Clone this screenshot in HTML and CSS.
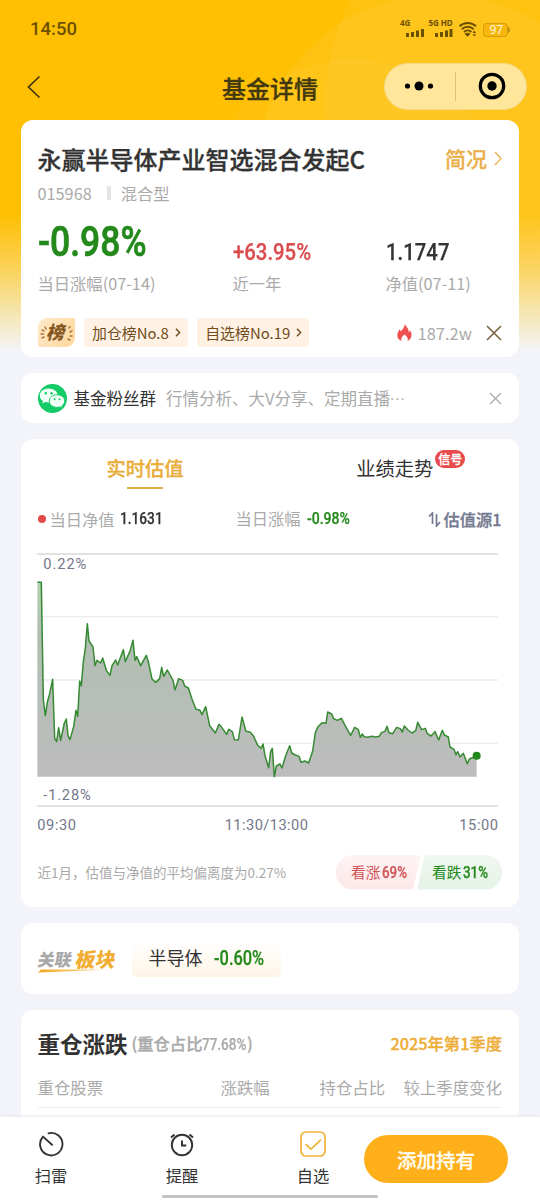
FILE: index.html
```html
<!DOCTYPE html>
<html lang="zh-CN">
<head>
<meta charset="utf-8">
<title>基金详情</title>
<link rel="stylesheet" href="styles.css">
</head>
<body>
<div class="screen">
  <svg class="glow" viewBox="0 0 540 360" aria-hidden="true">
    <circle cx="440" cy="180" r="186" fill="#fff" fill-opacity=".06"/>
    <circle cx="540" cy="100" r="214" fill="#fff" fill-opacity=".05"/>
    <circle cx="352" cy="212" r="152" fill="#fff" fill-opacity=".04"/>
  </svg>
  <div class="status">
    <span class="clock">14:50</span>
    <svg class="signals" width="112" height="24" viewBox="0 0 112 24">
      <g fill="#6b5000">
        <text x="0" y="9" class="net">4G</text>
        <text x="28.5" y="9" class="net" textLength="24">5G HD</text>
        <path d="M6 16h3v4h-3zM11 15h3v5h-3zM16 13.500h3v6.500h-3zM21 12h3v8h-3zM35 16h3v4h-3zM40 15h3v5h-3zM45 13.500h3v6.500h-3zM49.500 12h3v8h-3z"/>
        <path d="M64.500 16.800l3 3 3-3a5 5 0 0 0-6 0z"/>
        <path d="M72.500 16l1.800-2.400 1.800 2.400zM72.500 17.200h3.600l-1.800 2.400z"/>
      </g>
      <g fill="none" stroke="#6b5000" stroke-width="2"><path d="M59.500 9.300a12 12 0 0 1 16.500 0M61.800 12.200a8.500 8.500 0 0 1 11.800 0M64 15a5.500 5.500 0 0 1 7.400 0"/></g>
      <rect x="83.500" y="6.500" width="24" height="13" rx="3" fill="#f8b70f" stroke="#d59b08"/>
      <path d="M108.500 10.500q1.500 2.500 0 5" stroke="#8b6814" fill="none"/>
      <text x="89.500" y="17" class="battery">97</text>
    </svg>
  </div>
  <header class="nav">
    <svg class="back" width="14" height="24" viewBox="0 0 14 24"><path d="M12.500 1.500L1.500 12l11 10.500" fill="none" stroke="#42360f" stroke-width="1.700"/></svg>
    <h1>基金详情</h1>
    <div class="capsule">
      <svg width="30" height="10" viewBox="0 0 30 10"><circle cx="3.500" cy="5" r="2.600"/><circle cx="15" cy="5" r="4.500"/><circle cx="26.500" cy="5" r="2.600"/></svg>
      <i></i>
      <svg width="28" height="28" viewBox="0 0 28 28"><circle cx="14" cy="14" r="11.700" fill="none" stroke="#000" stroke-width="3.200"/><circle cx="14" cy="14" r="4.700"/></svg>
    </div>
  </header>

  <main>
    <section class="card summary">
      <div class="row title-row">
        <h2>永赢半导体产业智选混合发起C</h2>
        <a class="brief">简况<svg width="8" height="15" viewBox="0 0 8 15"><path d="M1 1l6 6.500L1 14" fill="none" stroke="#eab04c" stroke-width="1.300"/></svg></a>
      </div>
      <div class="meta"><span>015968</span><i></i><span>混合型</span></div>
      <div class="stats">
        <div><strong class="din big green">-0.98%</strong><small>当日涨幅(07-14)</small></div>
        <div><strong class="din mid red">+63.95%</strong><small>近一年</small></div>
        <div><strong class="din mid">1.1747</strong><small>净值(07-11)</small></div>
      </div>
      <div class="ranks">
        <span class="medal"><svg width="37" height="29" viewBox="0 0 37 29"><g stroke="#a77742" stroke-width="1.500" stroke-linecap="round"><path d="M4 12l2 1M3 16h2.500M4 20l2-1M7 9l1 2M31 10l1-1.500M32 14l2-1M32 18h2M30 21l2 1"/></g><text x="8" y="21" class="medal-text">榜</text></svg></span>
        <span class="tag">加仓榜No.8<svg width="6" height="9" viewBox="0 0 6 9"><path d="M1 .8l3.600 3.700L1 8.200"/></svg></span>
        <span class="tag">自选榜No.19<svg width="6" height="9" viewBox="0 0 6 9"><path d="M1 .8l3.600 3.700L1 8.200"/></svg></span>
        <span class="heat"><svg width="15" height="18" viewBox="0 0 15 18"><path d="M8 0c1 3 4.500 5 3.500 8.500 1-.5 1.300-1.300 1.300-2.500 1.400 2 2 3.700 1.700 5.800-.4 3-2.200 4.600-4.200 5.200 1-1.800.9-3.500-2.800-6.500-3.600 3-3.700 4.700-2.700 6.500C2 16.300.4 14.300.3 11.500.2 8.500 2 7 2.500 5.200c.9.700 1.100 1.400 1.200 2.300C5.700 5.500 7.500 3 8 0z" fill="#ee5050"/></svg>187.2w</span>
        <svg class="close" width="16" height="16" viewBox="0 0 16 16"><path d="M1 1l14 14M15 1L1 15" stroke="#76603c" stroke-width="1.500"/></svg>
      </div>
    </section>

    <section class="card group">
      <svg width="29" height="29" viewBox="0 0 29 29"><circle cx="14.500" cy="14.500" r="14.500" fill="#15cb68"/>
        <path d="M10.500 4.500C5.500 4.500 1.800 7.600 1.800 11.600c0 2.300 1.200 4.200 3.200 5.500l-.8 2.500 3.100-1.600c1.200.3 2.100.5 3.400.5 5.200 0 9-3.100 9-7s-4-7-9.200-7z" fill="#f0fff5"/>
        <path d="M19 10.700c-4.500 0-7.700 2.800-7.700 6.300s3.300 6.400 7.700 6.400c1 0 2-.2 2.800-.5l2.700 1.400-.7-2.300c1.800-1.200 2.900-2.900 2.900-5 0-3.500-3.300-6.300-7.700-6.300z" fill="#f0fff5" stroke="#15cb68"/>
        <g fill="#15cb68"><circle cx="7.800" cy="9.300" r="1.200"/><circle cx="13.500" cy="9.300" r="1.200"/><circle cx="16.700" cy="15.300" r="1"/><circle cx="21.500" cy="15.300" r="1"/></g></svg>
      <b>基金粉丝群</b>
      <span>行情分析、大V分享、定期直播<u>···</u></span>
      <svg class="close" width="13" height="13" viewBox="0 0 13 13"><path d="M1 1l11 11M12 1L1 12" stroke="#aaa" stroke-width="1.200"/></svg>
    </section>

    <section class="card trend">
      <nav class="tabs">
        <div class="tab active">实时估值</div>
        <div class="tab">业绩走势<em>信号</em></div>
      </nav>
      <div class="values">
        <div class="v1"><i></i>当日净值<strong class="din small">1.1631</strong></div>
        <div class="v2">当日涨幅<strong class="din small green">-0.98%</strong></div>
        <div class="source"><svg width="13" height="15" viewBox="0 0 13 15"><path d="M1 4.500L4.500 1v11M8.500 2v12L12 10" fill="none" stroke="#737990" stroke-width="1.700"/></svg>估值源1</div>
      </div>
      <!-- Chart units are thirds of a pixel -->
      <svg class="chart" width="464" height="300" viewBox="21 0 1392 900">
        <defs><linearGradient id="area" x1="0" y1="0" x2="0" y2="1"><stop offset="0" stop-color="#add0ac"/><stop offset=".25" stop-color="#adbbae"/><stop offset="1" stop-color="#b9b9b9"/></linearGradient></defs>
        <g stroke-width="4"><path d="M21 27H1404M21 783H1404" stroke="#d9d9d9"/><path d="M21 215H1404M21 405H1404M21 595H1404" stroke="#ededed"/></g>
        <path fill="url(#area)" fill-opacity=".95" d="M22 695V112H34L40 465 46 512 52 472 58 450 68 403 74 580 80 590 86 548 92 586 103 534 109 522 114 572 120 584 131 545 138 496 143 514 149 408 154 422 160 350 166 310 172 236 177 288 183 297 189 306 195 362 201 346 212 354 218 339 229 376 240 391 246 362 257 345 263 360 280 314 286 350 300 318 309 286 315 346 320 335 332 362 349 331 355 350 366 402 377 412 389 401 395 367 401 394 412 375 429 406 435 435 446 401 458 406 464 423 475 429 487 465 498 493 510 496 516 509 527 485 539 542 556 564 567 538 573 544 590 568 596 553 607 560 613 584 625 585 636 516 648 559 660 561 670 572 682 599 693 610 699 597 705 632 716 668 722 620 727 610 733 695 739 663 750 657 756 669 767 632 779 602 785 624 796 630 807 634 813 652 824 648 836 654 848 618 856 563 864 545 876 533 888 535 893 501 905 507 911 521 922 526 934 520 950 550 962 571 974 547 985 554 991 577 997 567 1002 575 1014 577 1025 574 1037 576 1048 574 1054 563 1065 559 1071 544 1077 563 1088 566 1100 547 1111 551 1117 561 1123 543 1134 555 1146 564 1157 557 1163 532 1175 554 1186 550 1192 566 1203 573 1215 560 1226 585 1237 556 1243 570 1255 576 1260 606 1272 613 1278 629 1283 620 1290 636 1300 625 1312 656 1318 642 1340 633V695Z"/>
        <path fill="none" stroke="#368a32" stroke-width="4.500" stroke-linejoin="round" d="M22 112H34L40 465 46 512 52 472 58 450 68 403 74 580 80 590 86 548 92 586 103 534 109 522 114 572 120 584 131 545 138 496 143 514 149 408 154 422 160 350 166 310 172 236 177 288 183 297 189 306 195 362 201 346 212 354 218 339 229 376 240 391 246 362 257 345 263 360 280 314 286 350 300 318 309 286 315 346 320 335 332 362 349 331 355 350 366 402 377 412 389 401 395 367 401 394 412 375 429 406 435 435 446 401 458 406 464 423 475 429 487 465 498 493 510 496 516 509 527 485 539 542 556 564 567 538 573 544 590 568 596 553 607 560 613 584 625 585 636 516 648 559 660 561 670 572 682 599 693 610 699 597 705 632 716 668 722 620 727 610 733 695 739 663 750 657 756 669 767 632 779 602 785 624 796 630 807 634 813 652 824 648 836 654 848 618 856 563 864 545 876 533 888 535 893 501 905 507 911 521 922 526 934 520 950 550 962 571 974 547 985 554 991 577 997 567 1002 575 1014 577 1025 574 1037 576 1048 574 1054 563 1065 559 1071 544 1077 563 1088 566 1100 547 1111 551 1117 561 1123 543 1134 555 1146 564 1157 557 1163 532 1175 554 1186 550 1192 566 1203 573 1215 560 1226 585 1237 556 1243 570 1255 576 1260 606 1272 613 1278 629 1283 620 1290 636 1300 625 1312 656 1318 642 1340 633"/>
        <circle cx="1340" cy="632" r="12" fill="#23891b"/>
        <g class="axis"><text x="40" y="71" textLength="129">0.22%</text><text x="40" y="765" textLength="142">-1.28%</text><text x="22" y="855" textLength="116">09:30</text><text x="584" y="855" textLength="250">11:30/13:00</text><text x="1288" y="855" textLength="116">15:00</text></g>
      </svg>
      <div class="row vote-row">
        <span class="note">近1月，估值与净值的平均偏离度为0.27%</span>
        <div class="vote">
          <svg width="167" height="35" viewBox="0 0 167 35"><defs><linearGradient id="up" x2="0" y2="1"><stop stop-color="#fef4f4"/><stop offset="1" stop-color="#fde7e8"/></linearGradient><linearGradient id="down" x2="0" y2="1"><stop stop-color="#f1f8f1"/><stop offset="1" stop-color="#e5f2e6"/></linearGradient></defs><path d="M18 0H83Q86 0 85 3L78.500 32Q78 34.500 75 34.500H18A17 17 0 0 1 18 0Z" fill="url(#up)"/><path d="M92 0H150A17 17 0 0 1 150 34.500H85Q82 34.500 82.700 32L89 3Q90 0 92 0Z" fill="url(#down)"/></svg>
          <span class="up">看涨<strong class="din small">69%</strong></span><span class="down">看跌<strong class="din small">31%</strong></span>
        </div>
      </div>
    </section>

    <section class="card sector">
      <div class="sector-logo"><span>关联</span><b>板块</b><svg width="78" height="4" viewBox="0 0 78 4"><defs><linearGradient id="swoosh"><stop stop-color="#f3a51a"/><stop offset=".7" stop-color="#fbd992"/><stop offset="1" stop-color="#fff"/></linearGradient></defs><path d="M3 0.500H78L0 3.500Z" fill="url(#swoosh)"/></svg></div>
      <div class="sector-item">半导体<strong class="din medium green">-0.60%</strong></div>
    </section>

    <section class="card holdings">
      <div class="row holdings-title"><h3>重仓涨跌</h3><span class="ratio">(重仓占比<strong class="din">77.68%</strong>)</span><a>2025年第1季度</a></div>
      <div class="columns"><span>重仓股票</span><span>涨跌幅</span><span>持仓占比</span><span>较上季度变化</span></div>
    </section>
  </main>

  <footer>
    <div class="action"><svg width="26" height="26" viewBox="0 0 26 26"><path d="M10.500 2.300A11.200 11.200 0 1 1 5 5.600L14 13.800" fill="none" stroke="#333" stroke-width="1.900" stroke-linecap="round" stroke-linejoin="round"/></svg>扫雷</div>
    <div class="action"><svg width="26" height="26" viewBox="0 0 26 26" fill="none" stroke="#333" stroke-width="1.900"><circle cx="13" cy="14" r="10.200"/><path d="M13 9.500v5h4.300M2 6.500l3.500-3M24 6.500l-3.500-3"/></svg>提醒</div>
    <div class="action"><svg width="26" height="26" viewBox="0 0 26 26" fill="none" stroke="#edb138" stroke-width="1.700"><rect x="1" y="1" width="24" height="24" rx="5"/><path d="M5.500 13.200l5.500 5 10-9.500"/></svg>自选</div>
    <button>添加持有</button>
    <i class="home"></i>
  </footer>
</div>
</body>
</html>
```
FILE: styles.css
```css
* { box-sizing: border-box; }
body { margin: 0; color: #333; font-family: "Noto Sans CJK SC", sans-serif; }
h1, h2, h3 { margin: 0; font-weight: 500; }
svg { display: block; flex: none; }
i, em { font-style: normal; }
.screen { position: relative; width: 540px; height: 1200px; overflow: hidden; background: linear-gradient(#ffbf02 0 215px, #fbd052 265px, #f5e7b4 315px, #f3f4fa 352px); }
.glow { position: absolute; top: 0; left: 0; width: 540px; height: 360px; -webkit-mask-image: linear-gradient(#000 60%, transparent); mask-image: linear-gradient(#000 60%, transparent); }
.status { position: relative; display: flex; justify-content: space-between; height: 58px; padding: 17px 28px 0 30px; }
.clock { font: 500 18.5px/24px Roboto, sans-serif; color: #6b5000; }
.net { font: 700 8px "Noto Sans", sans-serif; }
.battery { font: 12px "Noto Sans", sans-serif; fill: #fff8d8; }
.nav { position: relative; display: flex; align-items: center; height: 57px; padding: 0 13px 0 27px; }
.nav h1 { flex: 1; padding: 2px 0 0 115px; text-align: center; font-size: 24px; line-height: 36px; color: #42380f; }
.capsule { display: flex; align-items: center; width: 143px; height: 47px; border-radius: 24px; background: #ffe69b; border: 1px solid #f3d886; margin-top: -1px; padding-left: 19px; }
.capsule i { width: 1px; height: 29px; background: #d8c27f; margin: 0 22px 0 21px; }
.nav h1, .title-row h2, .brief, .tab.active, .tab em, .source, .ratio, .holdings a, footer button { -webkit-text-stroke: .3px currentColor; }
main { position: relative; display: flex; flex-direction: column; gap: 16px; padding: 5px 21px 0; }
.card { background: #fff; border-radius: 12px; padding: 0 17px 0 16.500px; }
.row { display: flex; align-items: center; }
.din { display: inline-block; font-family: Roboto, sans-serif; font-weight: 500; transform: scaleX(.86); transform-origin: left center; white-space: nowrap; -webkit-text-stroke: .25px currentColor; }
.green { color: #23891b; }
.red { color: #da4c4e; }

.summary { height: 237px; padding-top: 22px; }
.title-row { justify-content: space-between; height: 36px; }
.title-row h2 { font-size: 24px; line-height: 36px; margin-top: -2px; }
.brief { display: flex; align-items: center; gap: 7px; font-size: 21px; line-height: 30px; font-weight: 500; color: #eab04c; margin-top: -4px; }
.meta { display: flex; align-items: center; height: 29px; font-size: 16.300px; color: #aaa; }
.meta i { width: 4px; height: 14px; background: #e4e4e4; margin: 0 10px 0 15px; }
.stats { display: grid; grid-template-columns: 195px 153px 1fr; margin-top: 7px; }
.stats > div { display: flex; flex-direction: column; height: 83px; }
.stats strong { height: 55px; align-self: flex-start; }
.big { font-size: 42px; line-height: 56px; transform: scaleX(.845); -webkit-text-stroke-width: .7px; }
.mid { font-size: 24.500px; line-height: 75px; transform: scaleX(.83); }
.stats small { font-size: 16.300px; line-height: 28px; color: #aaa; }
.ranks { display: flex; align-items: center; height: 29px; margin-top: 21px; }
.medal { width: 37px; height: 29px; border-radius: 9px 2px 9px 2px; background: linear-gradient(120deg, #ffe9ca, #ffd89c); }
.medal-text { font: italic 900 18px "Noto Sans CJK SC", sans-serif; fill: #83551f; }
.tag { display: flex; align-items: center; height: 29px; padding: 0 7px 0 8px; gap: 6px; border-radius: 4px; margin-left: 9.500px; background: #fff2e5; font-size: 14.900px; color: #704c19; }
.tag path { fill: none; stroke: #704c19; stroke-width: 1.400; }
.heat { display: flex; align-items: center; gap: 6px; margin-left: auto; font-size: 16.500px; color: #aaa; }
.ranks .close { margin-left: 14px; }

.group { display: flex; align-items: center; height: 50px; }
.group b { margin-left: 7px; font-size: 16.500px; font-weight: 400; }
.group span { margin-left: 10px; font-size: 16.500px; color: #aaa; white-space: nowrap; }
.group u { font-family: Roboto, sans-serif; text-decoration: none; letter-spacing: 1px; }
.group .close { margin-left: auto; }

.trend { height: 468px; padding-top: 12px; }
.tabs { display: grid; grid-template-columns: 216px 1fr; height: 53px; }
.tab { position: relative; justify-self: center; height: 38px; font-size: 19.300px; line-height: 35px; white-space: nowrap; }
.tab:last-child { margin-left: 34px; }
.tab.active { color: #e9ad3b; font-weight: 500; margin-left: -1px; }
.tab.active::after { content: ""; position: absolute; bottom: 0; left: 21px; width: 36px; height: 2px; background: #deaf4c; }
.tab em { position: absolute; top: -1px; left: 79px; width: 30px; height: 18px; border-radius: 9px; background: #e94a4b; color: #fff; font-size: 12px; line-height: 18px; text-align: center; font-weight: 500; }
.values { display: grid; grid-template-columns: 198px 192px 1fr; height: 29px; font-size: 16.300px; line-height: 28px; color: #aaa; }
.v1 { display: flex; align-items: center; }
.v1 i { width: 8px; height: 8px; border-radius: 50%; background: #e14b4b; margin-right: 4px; }
.small { font-size: 16.300px; }
.v1 .din { margin-left: 5px; color: #333; transform: scaleX(.84); }
.v2 .din { margin-left: 6px; position: relative; top: -1px; }
.source { display: flex; align-items: center; gap: 3px; color: #737990; font-weight: 500; white-space: nowrap; }
.chart { margin-top: 12px; margin-left: -.5px; }
.axis { font-family: Roboto, sans-serif; font-size: 44px; fill: #737789; }
.vote-row { height: 35px; margin-top: 10px; justify-content: space-between; }
.note { font-size: 13.500px; line-height: 20px; margin-top: -2px; color: #aaa; white-space: nowrap; }
.vote { position: relative; display: flex; width: 167px; height: 35px; flex: none; }
.vote > svg { position: absolute; top: 0; left: 0; }
.vote span { position: relative; font-size: 14.700px; line-height: 34px; white-space: nowrap; }
.vote .up { width: 81px; padding-left: 16px; color: #ce5558; }
.vote .down { padding-left: 16px; color: #23891b; }
.vote .din { margin-left: 2px; transform: scaleX(.82); }

.sector { display: flex; align-items: center; height: 71px; padding-top: 1px; }
.sector-logo { width: 78px; height: 25px; display: grid; grid-template-columns: 38px 40px; align-items: end; white-space: nowrap; margin-top: 3px; }
.sector-logo span, .sector-logo b { transform: skewX(-10deg); line-height: 20px; font-weight: 900; }
.sector-logo span { font-size: 17px; color: #a8a8a8; }
.sector-logo b { font-size: 20px; color: #f1ae32; }
.sector-logo svg { grid-column: 1 / -1; }
.sector-item { width: 149px; height: 36px; margin-left: 16.500px; padding-left: 16.500px; border-radius: 5px; background: linear-gradient(#fff, #fff5e5); font-size: 18px; line-height: 33px; white-space: nowrap; }
.medium { font-size: 19.500px; margin-left: 11px; transform: scaleX(.84); }

.holdings { height: 160px; padding-top: 14px; }
.holdings-title { height: 38px; }
.holdings h3 { font-size: 22.500px; font-weight: 600; }
.ratio { margin-left: 4px; font-size: 16.300px; color: #aaa; white-space: nowrap; font-weight: 500; }
.ratio .din { margin-right: -9px; transform: scaleX(.83); }
.holdings a { margin-left: auto; font-size: 16.300px; font-weight: 500; color: #edad36; white-space: nowrap; }
.columns { display: grid; grid-template-columns: 183px 99px 84px 1fr; margin-top: 8px; height: 38px; border-bottom: 1px solid #eee; font-size: 16.400px; line-height: 34px; color: #aaa; white-space: nowrap; }

footer { position: absolute; left: 0; bottom: 0; width: 540px; height: 83px; background: #fff; display: grid; grid-template-columns: 131px 131px 102px 144px; box-shadow: 0 -1px 3px #e7e7ee; }
.action { display: flex; flex-direction: column; align-items: center; width: 102px; padding-top: 14px; font-size: 16.300px; line-height: 24px; gap: 6px; }
footer button { width: 144px; height: 48px; margin: 18px 0 0; padding: 0; border: 0; border-radius: 24px; background: #ffaf19; color: #fffdf0; font: 500 19.500px "Noto Sans CJK SC", sans-serif; }
.home { position: absolute; left: 162px; bottom: 2px; width: 216px; height: 3px; border-radius: 2px; background: #c2c2c2; }
```
